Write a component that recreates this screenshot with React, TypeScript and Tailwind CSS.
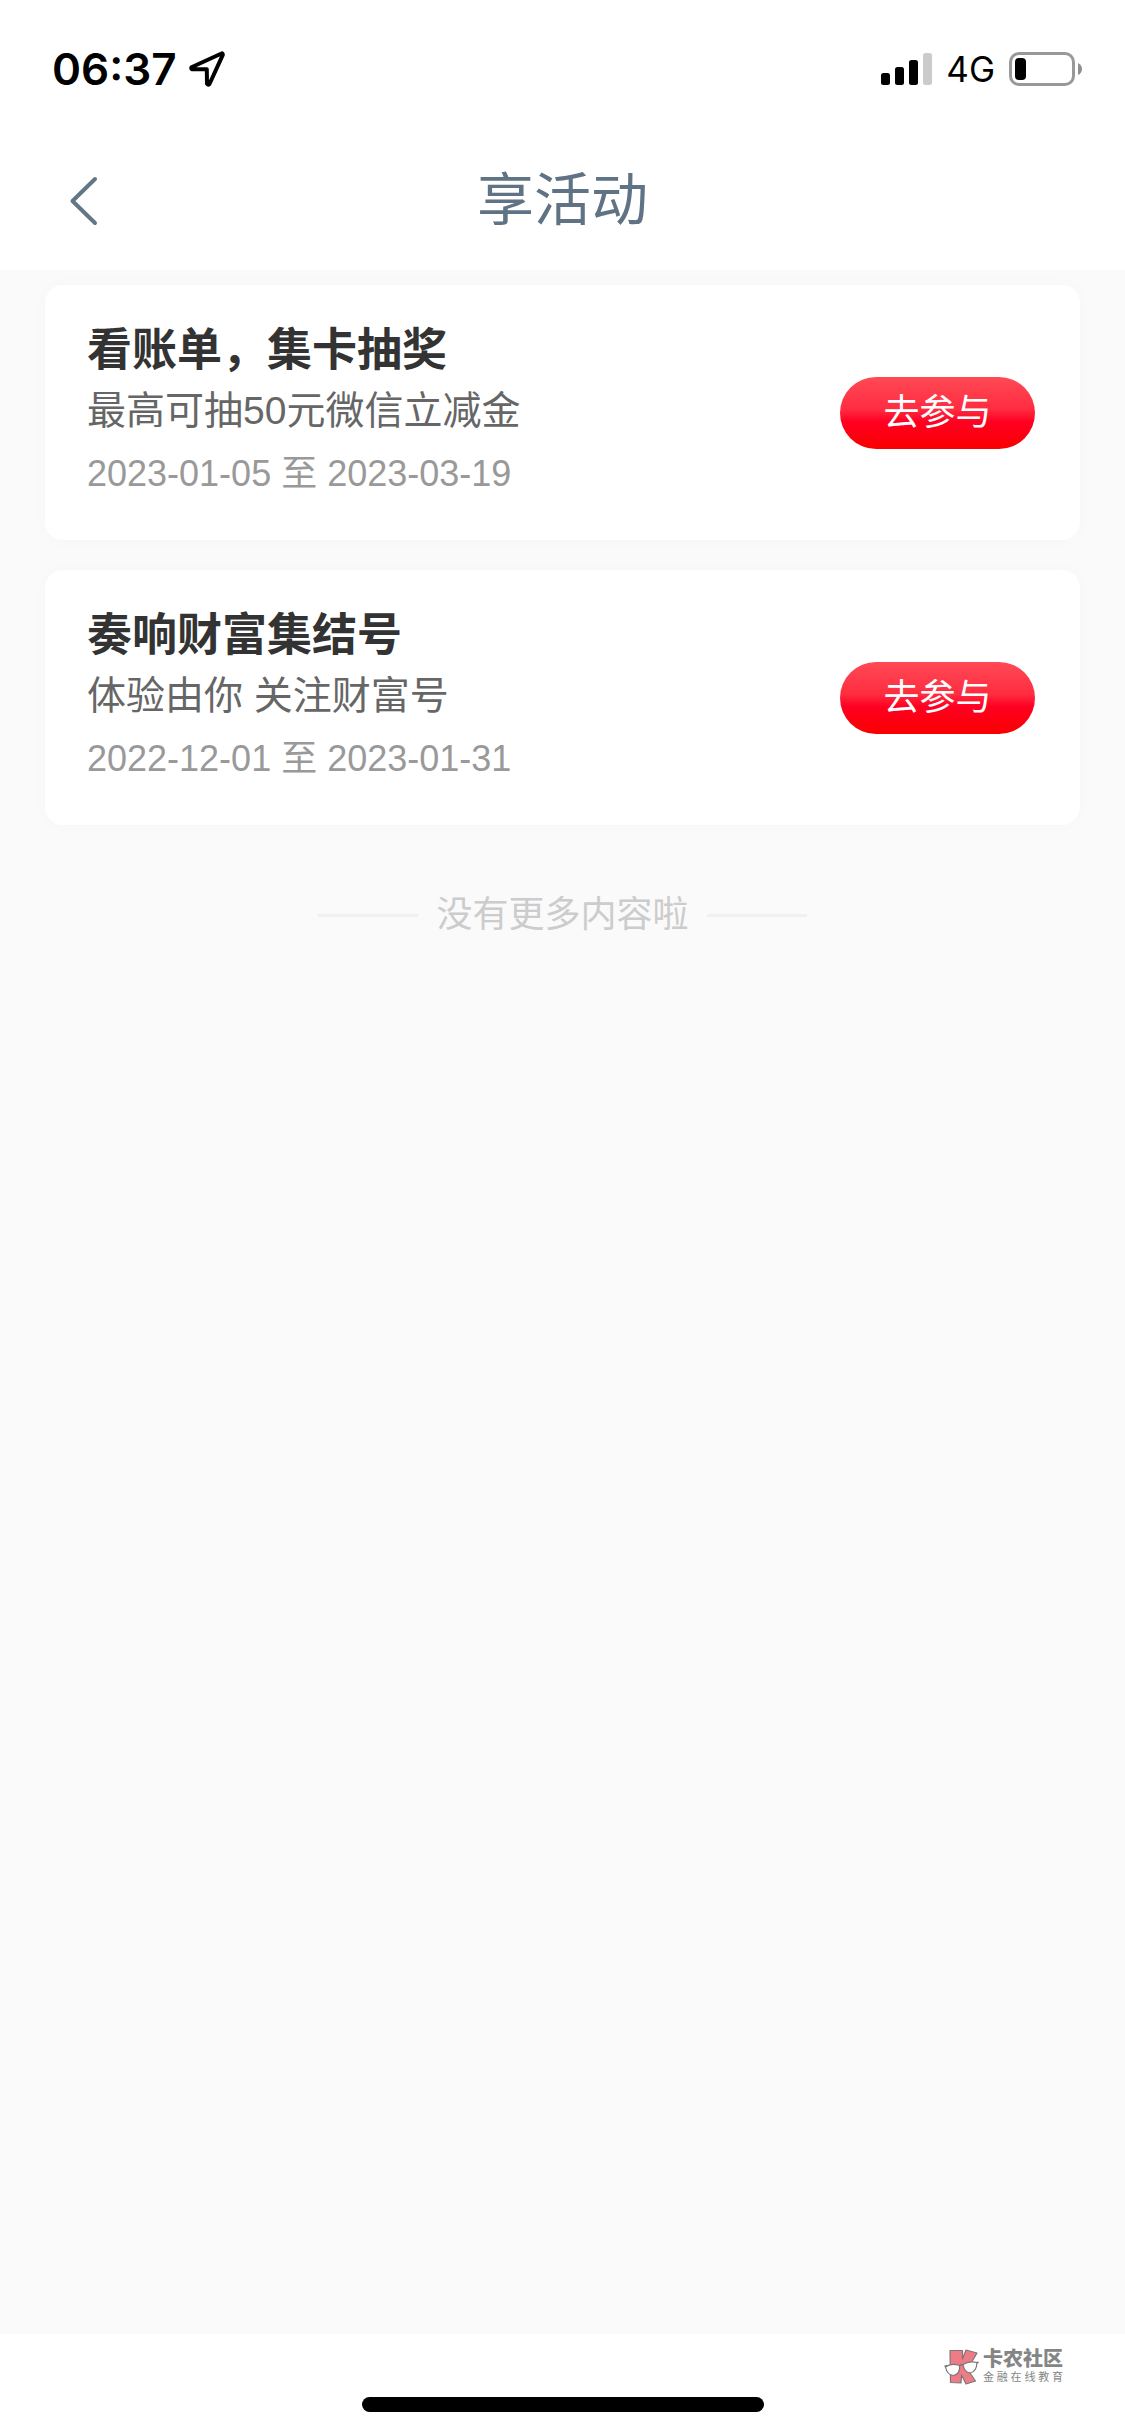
type Activity = {
  title: string;
  description: string;
  period: string;
};

const activities: Activity[] = [
  {
    title: "看账单，集卡抽奖",
    description: "最高可抽50元微信立减金",
    period: "2023-01-05 至 2023-03-19",
  },
  {
    title: "奏响财富集结号",
    description: "体验由你 关注财富号",
    period: "2022-12-01 至 2023-01-31",
  },
];

function LocationArrow() {
  return (
    <svg className="ml-3 h-9 w-9" viewBox="0 0 36 36" fill="none" aria-hidden="true">
      <path
        d="M32.5 2.5 L2.5 16.3 Q1.8 17.6 3 18.2 L17.8 18.2 L18 32.8 Q19 34.4 20.5 33 L33.8 3.8 Q33.8 2 32.5 2.5 Z"
        stroke="black"
        strokeWidth="4"
        strokeLinejoin="round"
      />
    </svg>
  );
}

function Signal() {
  return (
    <svg className="h-8 w-[51px]" viewBox="0 0 51 32" role="img" aria-label="信号">
      <rect x="0" y="20" width="9" height="12" rx="2.5" />
      <rect x="14" y="14" width="9" height="18" rx="2.5" />
      <rect x="28" y="7" width="9" height="25" rx="2.5" />
      <rect x="42" y="0" width="9" height="32" rx="2.5" fill="#cbcbcb" />
    </svg>
  );
}

function Battery() {
  return (
    <svg className="h-[34px] w-[73px]" viewBox="0 0 73 34" role="img" aria-label="电量">
      <rect x="1.5" y="1.5" width="63" height="31" rx="8.5" fill="none" stroke="#999999" strokeWidth="3" />
      <rect x="6" y="6" width="11" height="22" rx="4" />
      <path d="M69 11 Q73 13 73 17 Q73 21 69 23 Z" fill="#8f8f8f" />
    </svg>
  );
}

function StatusBar() {
  return (
    <div className="flex h-[138px] items-center justify-between pr-[43px] pl-[52px] text-black">
      <div className="flex items-center">
        <time className="font-['Inter',sans-serif] text-[44px] leading-none font-semibold">06:37</time>
        <LocationArrow />
      </div>
      <div className="flex items-center">
        <Signal />
        <span className="mr-[14px] ml-[14px] font-['Inter',sans-serif] text-[35px] leading-none font-normal">4G</span>
        <Battery />
      </div>
    </div>
  );
}

function NavBar() {
  return (
    <div className="grid h-[132px] grid-cols-[1fr_auto_1fr] items-start pt-6">
      <button type="button" aria-label="返回" className="ml-16 flex h-[78px] w-10 items-center justify-center">
        <svg className="h-[50px] w-8" viewBox="0 0 32 50" fill="none" aria-hidden="true">
          <path d="M27 3 L4.5 25 L27 47" stroke="#627786" strokeWidth="4" strokeLinecap="round" strokeLinejoin="round" />
        </svg>
      </button>
      <h1 className="text-[57px] leading-[76px] font-normal text-[#607384]">享活动</h1>
    </div>
  );
}

function ActivityCard({ title, description, period }: Activity) {
  return (
    <li className="flex items-center justify-between rounded-[18px] bg-white pt-9 pr-[45px] pb-9 pl-[42px] shadow-[0_0_18px_rgba(0,0,0,0.02)]">
      <div>
        <h2 className="text-[45px] leading-[60px] font-bold text-[#333333]">{title}</h2>
        <p className="text-[39px] leading-[60px] text-[#666666]">{description}</p>
        <p className="pt-[3px] text-[36px] leading-[60px] text-[#999999]">{period}</p>
      </div>
      <button
        type="button"
        className="h-[72px] w-[195px] rounded-full bg-[linear-gradient(180deg,#ff4a55_0%,#ff2c40_45%,#ff0022_62%,#fa0000_100%)] text-[36px] font-normal text-white"
      >
        去参与
      </button>
    </li>
  );
}

function Watermark() {
  return (
    <div className="absolute top-[14px] right-[62px] flex items-start gap-1 text-[#858585]">
      <svg className="mt-px h-9 w-[35px]" viewBox="0 0 35 36" aria-hidden="true">
        <g stroke="#7d7777" strokeWidth="1.2" strokeLinejoin="round">
          <path d="M6 1.5 L18.5 1.5 L18.5 10 L22 1 L33 4 L26 16 L24 21 L31.5 32 L22 35 L17.5 26 L17 34 L6.5 33.5 Z" fill="#ee7c86" />
          <path d="M1.5 18 Q7 13.5 15.5 16.5 Q16.5 25 9.5 26.5 Q3 26 1.5 18 Z" fill="white" />
          <path d="M19 15.5 Q25 11.5 33 13.5 Q32.5 23 26 24 Q20.5 23.5 19 15.5 Z" fill="white" />
          <path d="M0.5 17.5 L3 16.5 M15.5 17 Q17 15 19 16 M32.5 14 L34.5 13" fill="none" strokeWidth="1.6" />
        </g>
      </svg>
      <div>
        <p className="text-[20px] leading-[22px] font-black">卡农社区</p>
        <p className="flex justify-between text-[11px] leading-[14px]">
          {Array.from("金融在线教育").map((character) => (
            <span key={character}>{character}</span>
          ))}
        </p>
      </div>
    </div>
  );
}

export default function App() {
  return (
    <div className="flex min-h-screen flex-col bg-[#fafafa] font-['Liberation_Sans','Noto_Sans_CJK_SC',sans-serif]">
      <header className="bg-white">
        <StatusBar />
        <NavBar />
      </header>

      <main className="flex-1 px-[45px] pt-[15px]">
        <ul className="flex flex-col gap-[30px]">
          {activities.map((activity) => (
            <ActivityCard key={activity.title} {...activity} />
          ))}
        </ul>
        <div className="mt-[60px] flex items-center justify-center gap-[18px]">
          <span className="h-[3px] w-[100px] bg-[#f0f0f0]" />
          <p className="text-[36px] leading-[60px] text-[#cccccc]">没有更多内容啦</p>
          <span className="h-[3px] w-[100px] bg-[#f0f0f0]" />
        </div>
      </main>

      <footer className="relative flex h-[102px] items-end justify-center bg-white pb-6">
        <Watermark />
        <div className="h-[15px] w-[402px] rounded-full bg-black" />
      </footer>
    </div>
  );
}
